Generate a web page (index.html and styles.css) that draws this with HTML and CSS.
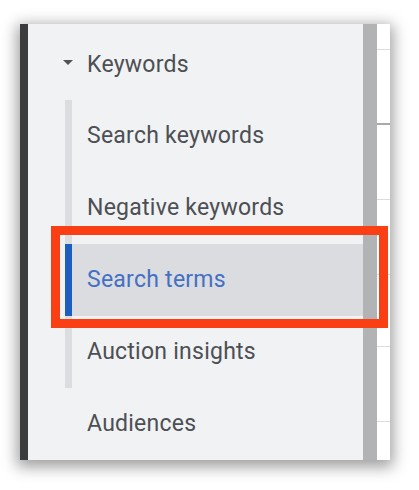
FILE: index.html
```html
<!DOCTYPE html>
<html>
<head>
<meta charset="utf-8">
<link rel="stylesheet" href="styles.css">
</head>
<body>
<div class="card">
  <div class="edge"></div>
  <nav class="panel">
    <div class="group-head">
      <span class="caret"></span>
      <span class="label">Keywords</span>
    </div>
    <div class="subitems">
      <div class="item">Search keywords</div>
      <div class="item">Negative keywords</div>
      <div class="item selected">Search terms</div>
      <div class="item">Auction insights</div>
    </div>
    <div class="item top">Audiences</div>
  </nav>
  <div class="scrollbar"></div>
  <div class="strip">
    <div class="cell first"></div>
    <div class="cell dark"></div>
    <div class="cell"></div>
    <div class="cell"></div>
    <div class="cell short"></div>
    <div class="cell"></div>
  </div>
  <div class="highlight"></div>
</div>
</body>
</html>
```
FILE: styles.css
```css
html, body {
  margin: 0;
  padding: 0;
  background: #ffffff;
  font-family: Roboto, "Noto Sans", sans-serif;
}

body {
  width: 419px;
  height: 490px;
  overflow: hidden;
}

.card {
  position: relative;
  margin: 24px 0 0 20px;
  width: 370px;
  height: 436px;
  display: flex;
  box-shadow: 0 4px 14px 3px rgba(0, 0, 0, 0.38);
  background: #f1f2f4;
}

.edge {
  width: 8px;
  background: #3b3c3e;
  flex: none;
}

.panel {
  width: 335px;
  flex: none;
  background: #f1f2f4;
  padding-top: 4px;
  box-sizing: border-box;
}

.group-head {
  height: 72px;
  display: flex;
  align-items: center;
  padding-left: 35px;
}

.caret {
  width: 0;
  height: 0;
  border-left: 5px solid transparent;
  border-right: 5px solid transparent;
  border-top: 5px solid #505357;
  margin-right: 14px;
  margin-top: -4px;
}

.label,
.item {
  font-size: 23px;
  color: #4c4f53;
  letter-spacing: 0.25px;
}

.subitems {
  margin-left: 37px;
  border-left: 7px solid #dcdde0;
}

.item {
  height: 72px;
  line-height: 72px;
  padding-left: 15px;
}

.item.selected {
  margin-left: -7px;
  border-left: 7px solid #1c5dbd;
  background: #dbdce0;
  color: #4470c4;
}

.item.top {
  padding-left: 59px;
}

.scrollbar {
  width: 14px;
  flex: none;
  background: #b2b3b5;
}

.strip {
  width: 13px;
  flex: none;
  background: #ffffff;
  display: flex;
  flex-direction: column;
}

.cell {
  height: 74px;
  flex: none;
  border-bottom: 1px solid #dadce0;
}

.cell.first {
  height: 25px;
}

.cell.dark {
  border-bottom: 2px solid #a9aaac;
  height: 73px;
}

.cell.short {
  height: 71px;
}

.highlight {
  position: absolute;
  left: 31px;
  top: 202px;
  width: 319px;
  height: 84px;
  border: 9px solid #fb3f14;
}
```
